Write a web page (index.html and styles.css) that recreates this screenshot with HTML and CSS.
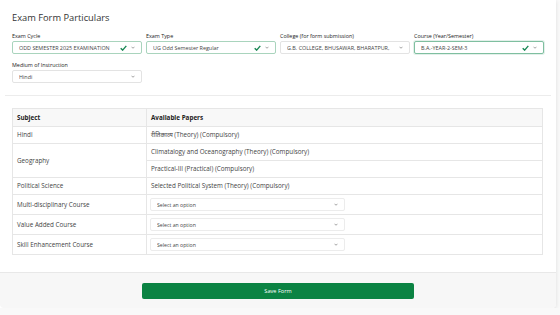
FILE: index.html
```html
<!DOCTYPE html>
<html lang="en">
<head>
  <meta charset="UTF-8">
  <meta name="viewport" content="width=device-width, initial-scale=1.0">
  <title>Exam Form Particulars</title>
  <link rel="stylesheet" href="styles.css">
</head>
<body>
  <div class="card">
    <div class="card-body">
      <h2 class="title">Exam Form Particulars</h2>
      <div class="fields">
        <div class="field">
          <label>Exam Cycle</label>
          <div class="select valid">
            <span class="value">ODD SEMESTER 2025 EXAMINATION</span>
            <svg class="check" viewBox="0 0 10 8"><path d="M1 4.2 L3.8 7 L9 1" /></svg>
            <svg class="chev" viewBox="0 0 8 5"><path d="M1 1 L4 4 L7 1" /></svg>
          </div>
        </div>
        <div class="field">
          <label>Exam Type</label>
          <div class="select valid">
            <span class="value">UG Odd Semester Regular</span>
            <svg class="check" viewBox="0 0 10 8"><path d="M1 4.2 L3.8 7 L9 1" /></svg>
            <svg class="chev" viewBox="0 0 8 5"><path d="M1 1 L4 4 L7 1" /></svg>
          </div>
        </div>
        <div class="field">
          <label>College (for form submission)</label>
          <div class="select">
            <span class="value">G.B. COLLEGE, BHUSAWAR, BHARATPUR,</span>
            <svg class="chev" viewBox="0 0 8 5"><path d="M1 1 L4 4 L7 1" /></svg>
          </div>
        </div>
        <div class="field">
          <label>Course (Year/Semester)</label>
          <div class="select valid focus">
            <span class="value">B.A.-YEAR-2-SEM-3</span>
            <svg class="check" viewBox="0 0 10 8"><path d="M1 4.2 L3.8 7 L9 1" /></svg>
            <svg class="chev" viewBox="0 0 8 5"><path d="M1 1 L4 4 L7 1" /></svg>
          </div>
        </div>
        <div class="field">
          <label>Medium of Instruction</label>
          <div class="select">
            <span class="value">Hindi</span>
            <svg class="chev" viewBox="0 0 8 5"><path d="M1 1 L4 4 L7 1" /></svg>
          </div>
        </div>
      </div>
      <hr class="divider">
      <table class="papers">
        <thead>
          <tr>
            <th class="subject">Subject</th>
            <th>Available Papers</th>
          </tr>
        </thead>
        <tbody>
          <tr>
            <td>Hindi</td>
            <td>रीतिकाव्य (Theory) (Compulsory)</td>
          </tr>
          <tr>
            <td rowspan="2">Geography</td>
            <td>Climatalogy and Oceanography (Theory) (Compulsory)</td>
          </tr>
          <tr>
            <td>Practical-III (Practical) (Compulsory)</td>
          </tr>
          <tr>
            <td>Political Science</td>
            <td>Selected Political System (Theory) (Compulsory)</td>
          </tr>
          <tr>
            <td>Multi-disciplinary Course</td>
            <td class="pick">
              <div class="select small">
                <span class="value">Select an option</span>
                <svg class="chev" viewBox="0 0 8 5"><path d="M1 1 L4 4 L7 1" /></svg>
              </div>
            </td>
          </tr>
          <tr>
            <td>Value Added Course</td>
            <td class="pick">
              <div class="select small">
                <span class="value">Select an option</span>
                <svg class="chev" viewBox="0 0 8 5"><path d="M1 1 L4 4 L7 1" /></svg>
              </div>
            </td>
          </tr>
          <tr>
            <td>Skill Enhancement Course</td>
            <td class="pick">
              <div class="select small">
                <span class="value">Select an option</span>
                <svg class="chev" viewBox="0 0 8 5"><path d="M1 1 L4 4 L7 1" /></svg>
              </div>
            </td>
          </tr>
        </tbody>
      </table>
    </div>
    <div class="card-footer">
      <button class="save">Save Form</button>
    </div>
  </div>
</body>
</html>
```

FILE: styles.css
```css
body {
  margin: 0;
  background-color: #f9f9f9;
  font-family: 'Open Sans', 'Noto Sans', sans-serif;
  color: #333;
}
.card {
  width: 556px;
  background-color: #fff;
  border-radius: 0 0 4px 0;
  box-shadow: 0 1px 4px rgba(0, 0, 0, 0.12);
}
.card-body {
  padding: 11px 12px 17px;
}
.title {
  margin: 0 0 8px;
  font-size: 9.3px;
  line-height: 14px;
  font-weight: 400;
  color: #333;
}
.fields {
  display: grid;
  grid-template-columns: repeat(4, 130px);
  column-gap: 4px;
  row-gap: 8px;
}
.field label {
  display: block;
  font-size: 5.4px;
  line-height: 7px;
  margin-bottom: 1px;
  color: #222;
}
.select {
  box-sizing: border-box;
  display: flex;
  align-items: center;
  height: 13px;
  padding: 0 6px;
  border: 1px solid #e3e3e3;
  border-radius: 2px;
  font-size: 5.4px;
  color: #444;
  background-color: #fff;
}
.select.valid {
  border-color: #a9d4bd;
}
.select.focus {
  border-color: #7fbfa0;
  box-shadow: 0 0 0 1px rgba(25, 135, 84, 0.12);
}
.select .value {
  flex: 1;
  white-space: nowrap;
  overflow: hidden;
}
.check {
  width: 7px;
  height: 6px;
  margin-right: 4px;
  fill: none;
  stroke: #198754;
  stroke-width: 2;
}
.chev {
  width: 4px;
  height: 3px;
  fill: none;
  stroke: #666;
  stroke-width: 1.2;
}
.divider {
  border: 0;
  border-top: 1px solid #ececec;
  margin: 12px -7px 12px;
}
.papers {
  width: 531px;
  border-collapse: collapse;
  border: 1px solid #e6e6e6;
  font-size: 6.3px;
  line-height: 8px;
  color: #444;
}
.papers th, .papers td {
  border: 1px solid #e6e6e6;
  text-align: left;
  padding: 0 4px;
  height: 16px;
}
.papers th {
  height: 17px;
  background-color: #f8f8f8;
  font-weight: 700;
  color: #222;
}
.papers th.subject {
  width: 125px;
}
.papers td.pick {
  padding: 3px 3px;
  height: auto;
}
.select.small {
  width: 195px;
  height: 13px;
  border-color: #ececec;
  font-size: 5.2px;
}
.card-footer {
  display: flex;
  justify-content: center;
  padding: 10px 0 9px;
  background-color: #f7f7f7;
  border-top: 1px solid #e8e8e8;
  border-radius: 0 0 4px 4px;
}
.save {
  width: 272px;
  height: 16px;
  border: none;
  border-radius: 2px;
  background-color: #0b8343;
  color: #fff;
  font-family: 'Open Sans', 'Noto Sans', sans-serif;
  font-size: 5.6px;
  cursor: pointer;
}
```
